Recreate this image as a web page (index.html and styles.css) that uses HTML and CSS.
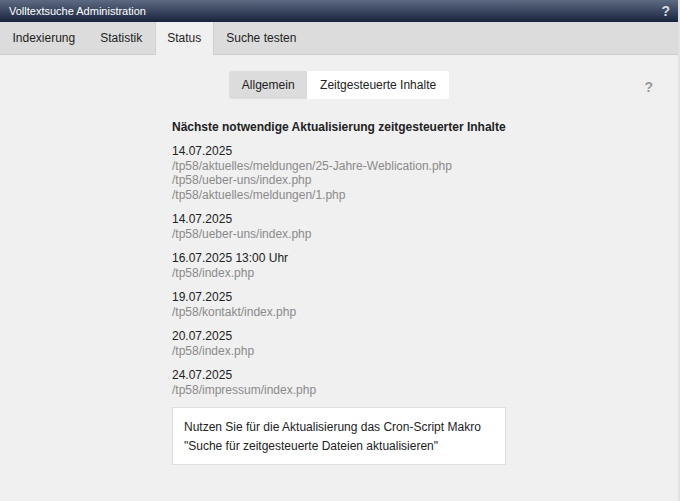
FILE: index.html
```html
<!DOCTYPE html>
<html lang="de">
<head>
  <meta charset="UTF-8">
  <meta name="viewport" content="width=device-width, initial-scale=1.0">
  <title>Volltextsuche Administration</title>
  <link rel="stylesheet" href="styles.css">
</head>
<body>
  <div class="titlebar">
    <span class="title">Volltextsuche Administration</span>
    <span class="title-help">?</span>
  </div>

  <div class="tabs">
    <div class="tab">Indexierung</div>
    <div class="tab">Statistik</div>
    <div class="tab active">Status</div>
    <div class="tab">Suche testen</div>
  </div>

  <div class="content">
    <span class="help">?</span>

    <div class="switch">
      <div class="switch-item">Allgemein</div>
      <div class="switch-item selected">Zeitgesteuerte Inhalte</div>
    </div>

    <div class="list">
      <h2>Nächste notwendige Aktualisierung zeitgesteuerter Inhalte</h2>

      <div class="entry">
        <div class="date">14.07.2025</div>
        <div class="path">/tp58/aktuelles/meldungen/25-Jahre-Weblication.php</div>
        <div class="path">/tp58/ueber-uns/index.php</div>
        <div class="path">/tp58/aktuelles/meldungen/1.php</div>
      </div>
      <div class="entry">
        <div class="date">14.07.2025</div>
        <div class="path">/tp58/ueber-uns/index.php</div>
      </div>
      <div class="entry">
        <div class="date">16.07.2025 13:00 Uhr</div>
        <div class="path">/tp58/index.php</div>
      </div>
      <div class="entry">
        <div class="date">19.07.2025</div>
        <div class="path">/tp58/kontakt/index.php</div>
      </div>
      <div class="entry">
        <div class="date">20.07.2025</div>
        <div class="path">/tp58/index.php</div>
      </div>
      <div class="entry">
        <div class="date">24.07.2025</div>
        <div class="path">/tp58/impressum/index.php</div>
      </div>

      <div class="note">
        Nutzen Sie für die Aktualisierung das Cron-Script Makro<br>
        "Suche für zeitgesteuerte Dateien aktualisieren"
      </div>
    </div>
  </div>
</body>
</html>
```

FILE: styles.css
```css
html, body {
  height: 100%;
}
body {
  margin: 0;
  font-family: "Liberation Sans", Arial, sans-serif;
  font-size: 12px;
  color: #222;
  background-color: #f0f0f0;
  display: flex;
  flex-direction: column;
  border-right: 2px solid #e2e2e2;
  box-sizing: border-box;
}
.titlebar {
  height: 22px;
  display: flex;
  align-items: center;
  justify-content: space-between;
  padding: 0 9px 0 9px;
  background: linear-gradient(to bottom, #5e6a82, #18233e);
  color: #fff;
  font-size: 11px;
}
.title-help {
  font-weight: bold;
  font-size: 14px;
  color: #d8dbe2;
  margin-right: -1px;
}
.tabs {
  display: flex;
  height: 32px;
  background-color: #dcdcdc;
  border-bottom: 1px solid #cbcbcb;
}
.tab {
  padding: 0 12.5px;
  line-height: 32px;
  color: #222;
}
.active {
  background-color: #f0f0f0;
  height: 33px;
  border-left: 1px solid #d0d0d0;
  border-right: 1px solid #d0d0d0;
  padding: 0 11.5px;
}
.content {
  position: relative;
  flex: 1;
  display: flex;
  flex-direction: column;
  align-items: center;
  padding-top: 16px;
}
.help {
  position: absolute;
  top: 24px;
  right: 25px;
  font-weight: bold;
  font-size: 14px;
  color: #999;
}
.switch {
  display: flex;
  height: 28px;
  border-radius: 3px;
  overflow: hidden;
}
.switch-item {
  padding: 0 12.5px;
  line-height: 28px;
  background-color: #fff;
}
.selected {
  padding: 0 12.5px 0 13px;
}
.switch-item:first-child {
  background-color: #dcdcdc;
}
.list {
  width: 334px;
  margin-top: 21px;
}
h2 {
  font-size: 12px;
  font-weight: bold;
  margin: 0 0 9px;
  line-height: 15px;
}
.entry {
  line-height: 14.5px;
  margin-bottom: 10px;
}
.path {
  color: #8a8a8a;
}
.note {
  background-color: #fff;
  border: 1px solid #dedede;
  padding: 10px 11px 8px;
  line-height: 19px;
}
```
